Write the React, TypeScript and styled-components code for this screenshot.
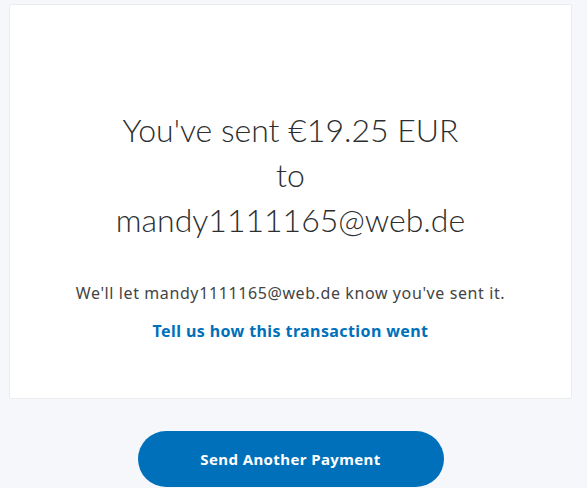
import styled, { createGlobalStyle } from "styled-components";

const GlobalStyle = createGlobalStyle`
  body {
    margin: 0;
    background: #f5f7fa;
    font-family: "Noto Sans", "Liberation Sans", sans-serif;
    color: #2c2e2f;
  }
`;

const Page = styled.div`
  padding: 4px 15px 0 9px;
  display: flex;
  flex-direction: column;
  align-items: center;
`;

const Card = styled.section`
  box-sizing: border-box;
  width: 100%;
  height: 395px;
  background: #fff;
  border: 1px solid #eaeced;
  border-radius: 2px;
  padding: 102px 20px 0;
  text-align: center;
`;

const Heading = styled.h1`
  margin: 0 auto;
  width: 360px;
  font-family: Lato, "Liberation Sans", sans-serif;
  font-weight: 300;
  font-size: 32px;
  line-height: 45px;
  color: #2c2e2f;
`;

const Note = styled.p`
  margin: 40px 0 0;
  font-size: 16px;
  line-height: 22px;
  letter-spacing: 0.6px;
  color: #444;
`;

const Link = styled.a`
  display: inline-block;
  margin-top: 16px;
  font-size: 16px;
  line-height: 22px;
  letter-spacing: 0.4px;
  font-weight: 700;
  color: #0070ba;
  text-decoration: none;
`;

const Button = styled.button`
  margin-top: 32px;
  width: 306px;
  height: 56px;
  border: none;
  border-radius: 28px;
  background: #0070ba;
  color: #fff;
  font-family: "Noto Sans", "Liberation Sans", sans-serif;
  font-weight: 700;
  font-size: 15px;
  letter-spacing: 0.4px;
`;

export default function App() {
  return (
    <>
      <GlobalStyle />
      <Page>
        <Card>
          <Heading>You've sent €19.25 EUR to mandy1111165@web.de</Heading>
          <Note>We'll let mandy1111165@web.de know you've sent it.</Note>
          <Link href="#">Tell us how this transaction went</Link>
        </Card>
        <Button>Send Another Payment</Button>
      </Page>
    </>
  );
}
